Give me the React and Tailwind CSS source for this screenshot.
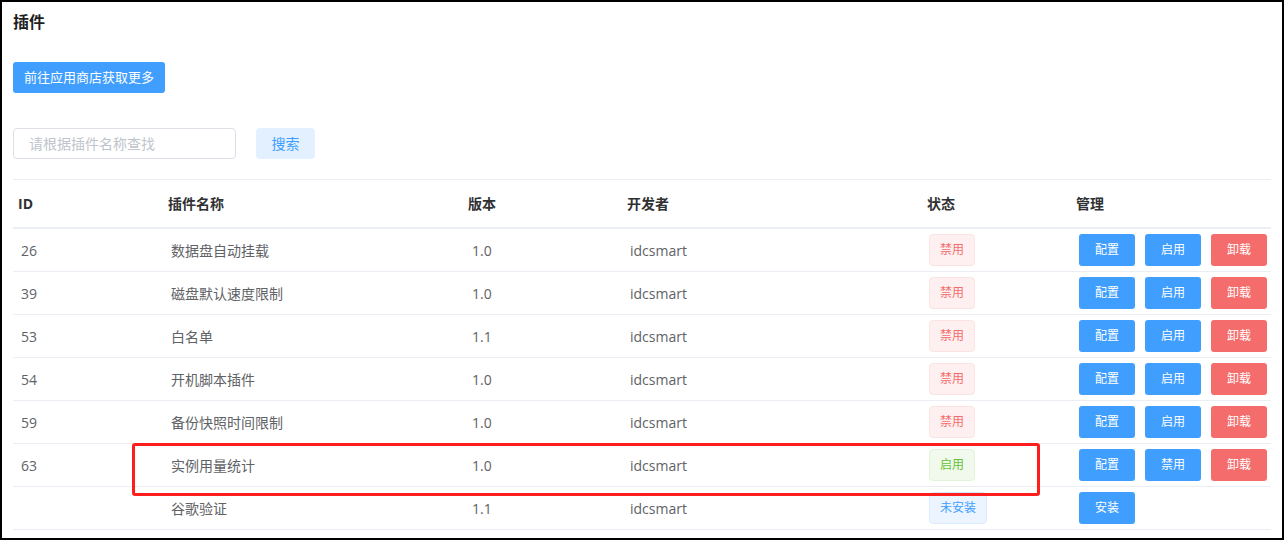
// Plugin list page — search bar, plugin table and a highlight marker

const rows = [
  { id: '26', name: '数据盘自动挂载', ver: '1.0', dev: 'idcsmart', status: 'off' },
  { id: '39', name: '磁盘默认速度限制', ver: '1.0', dev: 'idcsmart', status: 'off' },
  { id: '53', name: '白名单', ver: '1.1', dev: 'idcsmart', status: 'off' },
  { id: '54', name: '开机脚本插件', ver: '1.0', dev: 'idcsmart', status: 'off' },
  { id: '59', name: '备份快照时间限制', ver: '1.0', dev: 'idcsmart', status: 'off' },
  { id: '63', name: '实例用量统计', ver: '1.0', dev: 'idcsmart', status: 'on' },
  { id: '', name: '谷歌验证', ver: '1.1', dev: 'idcsmart', status: 'none' },
];

const cols = ['w-[150px]', 'w-[300px]', 'w-[159px]', 'w-[300px]', 'w-[149px]', 'w-[200px]'];

function Tag({ status }) {
  if (status === 'on')
    return <span className="inline-flex items-center justify-center w-[46px] h-[32px] rounded-[4px] border border-[#e1f3d8] bg-[#f0f9eb] text-[#67c23a] text-[12px]">启用</span>;
  if (status === 'none')
    return <span className="inline-flex items-center justify-center w-[58px] h-[32px] rounded-[4px] border border-[#d9ecff] bg-[#ecf5ff] text-[#409eff] text-[12px]">未安装</span>;
  return <span className="inline-flex items-center justify-center w-[46px] h-[32px] rounded-[4px] border border-[#fde2e2] bg-[#fef0f0] text-[#f56c6c] text-[12px]">禁用</span>;
}

function Btn({ children, red }) {
  return (
    <button className={`w-[56px] h-[32px] rounded-[3px] text-white text-[12px] ${red ? 'bg-[#f56c6c]' : 'bg-[#409eff]'}`}>
      {children}
    </button>
  );
}

export default function App() {
  return (
    <div
      className="relative w-[1284px] h-[540px] box-border border-2 border-black bg-white overflow-hidden px-[11px] pt-[8px]"
      style={{ fontFamily: '"Open Sans", "Noto Sans CJK SC", sans-serif' }}
    >
      {/* Title */}
      <h1 className="text-[16px] leading-[24px] font-bold text-[#1f1f1f]">插件</h1>

      {/* Store link */}
      <button className="mt-[28px] w-[152px] h-[31px] rounded-[3px] bg-[#409eff] text-white text-[13px]">
        前往应用商店获取更多
      </button>

      {/* Search */}
      <div className="mt-[35px] flex items-center gap-[20px]">
        <div className="w-[223px] h-[31px] rounded-[4px] border border-[#dcdfe6] flex items-center pl-[15px] text-[14px] text-[#c0c4cc]">
          请根据插件名称查找
        </div>
        <button className="w-[59px] h-[31px] rounded-[4px] bg-[#e3f0ff] text-[#409eff] text-[14px]">搜索</button>
      </div>

      {/* Table */}
      <div className="mt-[20px] w-[1258px] border-t border-[#ebeef5]">
        <div className="flex h-[49px] items-center border-b-2 border-[#ebeef5] text-[14px] font-bold text-[#303133]">
          {['ID', '插件名称', '版本', '开发者', '状态', '管理'].map((h, i) => (
            <div key={h} className={`${cols[i]} pl-[5px]`}>{h}</div>
          ))}
        </div>

        {rows.map((r, idx) => (
          <div key={idx} className="flex h-[43px] items-center border-b border-[#ebeef5] text-[14px] text-[#606266]">
            <div className={`${cols[0]} pl-[8px]`}>{r.id}</div>
            <div className={`${cols[1]} pl-[8px]`}>{r.name}</div>
            <div className={`${cols[2]} pl-[9px]`}>{r.ver}</div>
            <div className={`${cols[3]} pl-[8px]`}>{r.dev}</div>
            <div className={`${cols[4]} pl-[7px] flex`}><Tag status={r.status} /></div>
            <div className={`${cols[5]} pl-[8px] flex gap-[10px]`}>
              {r.status === 'none' ? (
                <Btn>安装</Btn>
              ) : (
                <>
                  <Btn>配置</Btn>
                  <Btn>{r.status === 'on' ? '禁用' : '启用'}</Btn>
                  <Btn red>卸载</Btn>
                </>
              )}
            </div>
          </div>
        ))}
      </div>

      {/* Highlight marker over row 63 */}
      <div className="absolute left-[130px] top-[441px] w-[908px] h-[53px] border-[3px] border-[#ff1e1e] rounded-[3px] pointer-events-none" />
    </div>
  );
}
